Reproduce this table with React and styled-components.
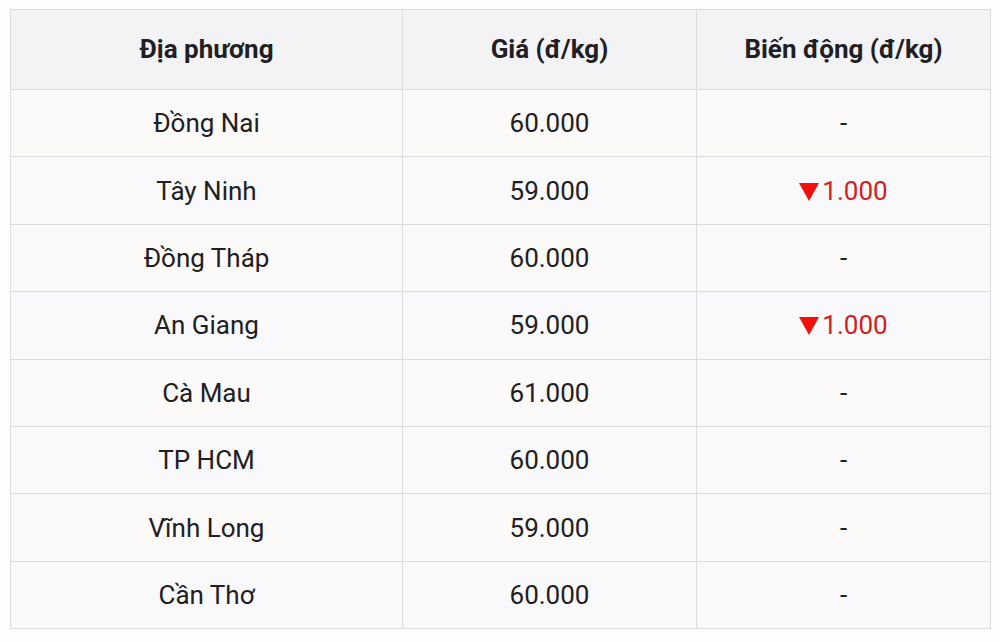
import React from "react";
import styled, { createGlobalStyle } from "styled-components";

const Global = createGlobalStyle`
  html, body { margin: 0; padding: 0; background: #fefcfc; }
  body { font-family: Roboto, "Noto Sans", "Liberation Sans", sans-serif; }
`;

const Page = styled.div`
  padding: 9px 10px 0 10px;
  width: 1000px;
  box-sizing: border-box;
`;

const Table = styled.table`
  width: 980px;
  border-collapse: collapse;
  table-layout: fixed;
  color: #202024;
`;

const Th = styled.th`
  height: 80px;
  padding: 0 0 2px 0;
  box-sizing: border-box;
  background: #f3f3f5;
  border: 1px solid #dcdcdf;
  font-size: 26px;
  font-weight: 700;
  text-align: center;
  vertical-align: middle;
`;

const Tr = styled.tr`
  background: ${(p) => (p.$odd ? "#fcf9f9" : "#f9f9fb")};
`;

const Td = styled.td`
  height: 67.4px;
  padding: 0;
  box-sizing: border-box;
  border: 1px solid #dcdcdf;
  font-size: 26px;
  font-weight: 400;
  text-align: center;
  vertical-align: middle;
  color: ${(p) => (p.$down ? "#d0211c" : "#202024")};
`;

const Arrow = styled.span`
  display: inline-block;
  width: 0;
  height: 0;
  border-left: 10px solid transparent;
  border-right: 10px solid transparent;
  border-top: 18px solid #f0100c;
  margin-right: 3px;
  vertical-align: -1px;
`;

const rows = [
  ["Đồng Nai", "60.000", null],
  ["Tây Ninh", "59.000", "1.000"],
  ["Đồng Tháp", "60.000", null],
  ["An Giang", "59.000", "1.000"],
  ["Cà Mau", "61.000", null],
  ["TP HCM", "60.000", null],
  ["Vĩnh Long", "59.000", null],
  ["Cần Thơ", "60.000", null],
];

export default function App() {
  return (
    <>
      <Global />
      <Page>
        <Table>
          <colgroup>
            <col style={{ width: "392px" }} />
            <col style={{ width: "294px" }} />
            <col style={{ width: "294px" }} />
          </colgroup>
          <thead>
            <tr>
              <Th>Địa phương</Th>
              <Th>Giá (đ/kg)</Th>
              <Th>Biến động (đ/kg)</Th>
            </tr>
          </thead>
          <tbody>
            {rows.map(([place, price, change], i) => (
              <Tr key={place} $odd={i % 2 === 0}>
                <Td>{place}</Td>
                <Td>{price}</Td>
                <Td $down={!!change}>
                  {change ? (
                    <>
                      <Arrow aria-label="giảm" />
                      {change}
                    </>
                  ) : (
                    "-"
                  )}
                </Td>
              </Tr>
            ))}
          </tbody>
        </Table>
      </Page>
    </>
  );
}
